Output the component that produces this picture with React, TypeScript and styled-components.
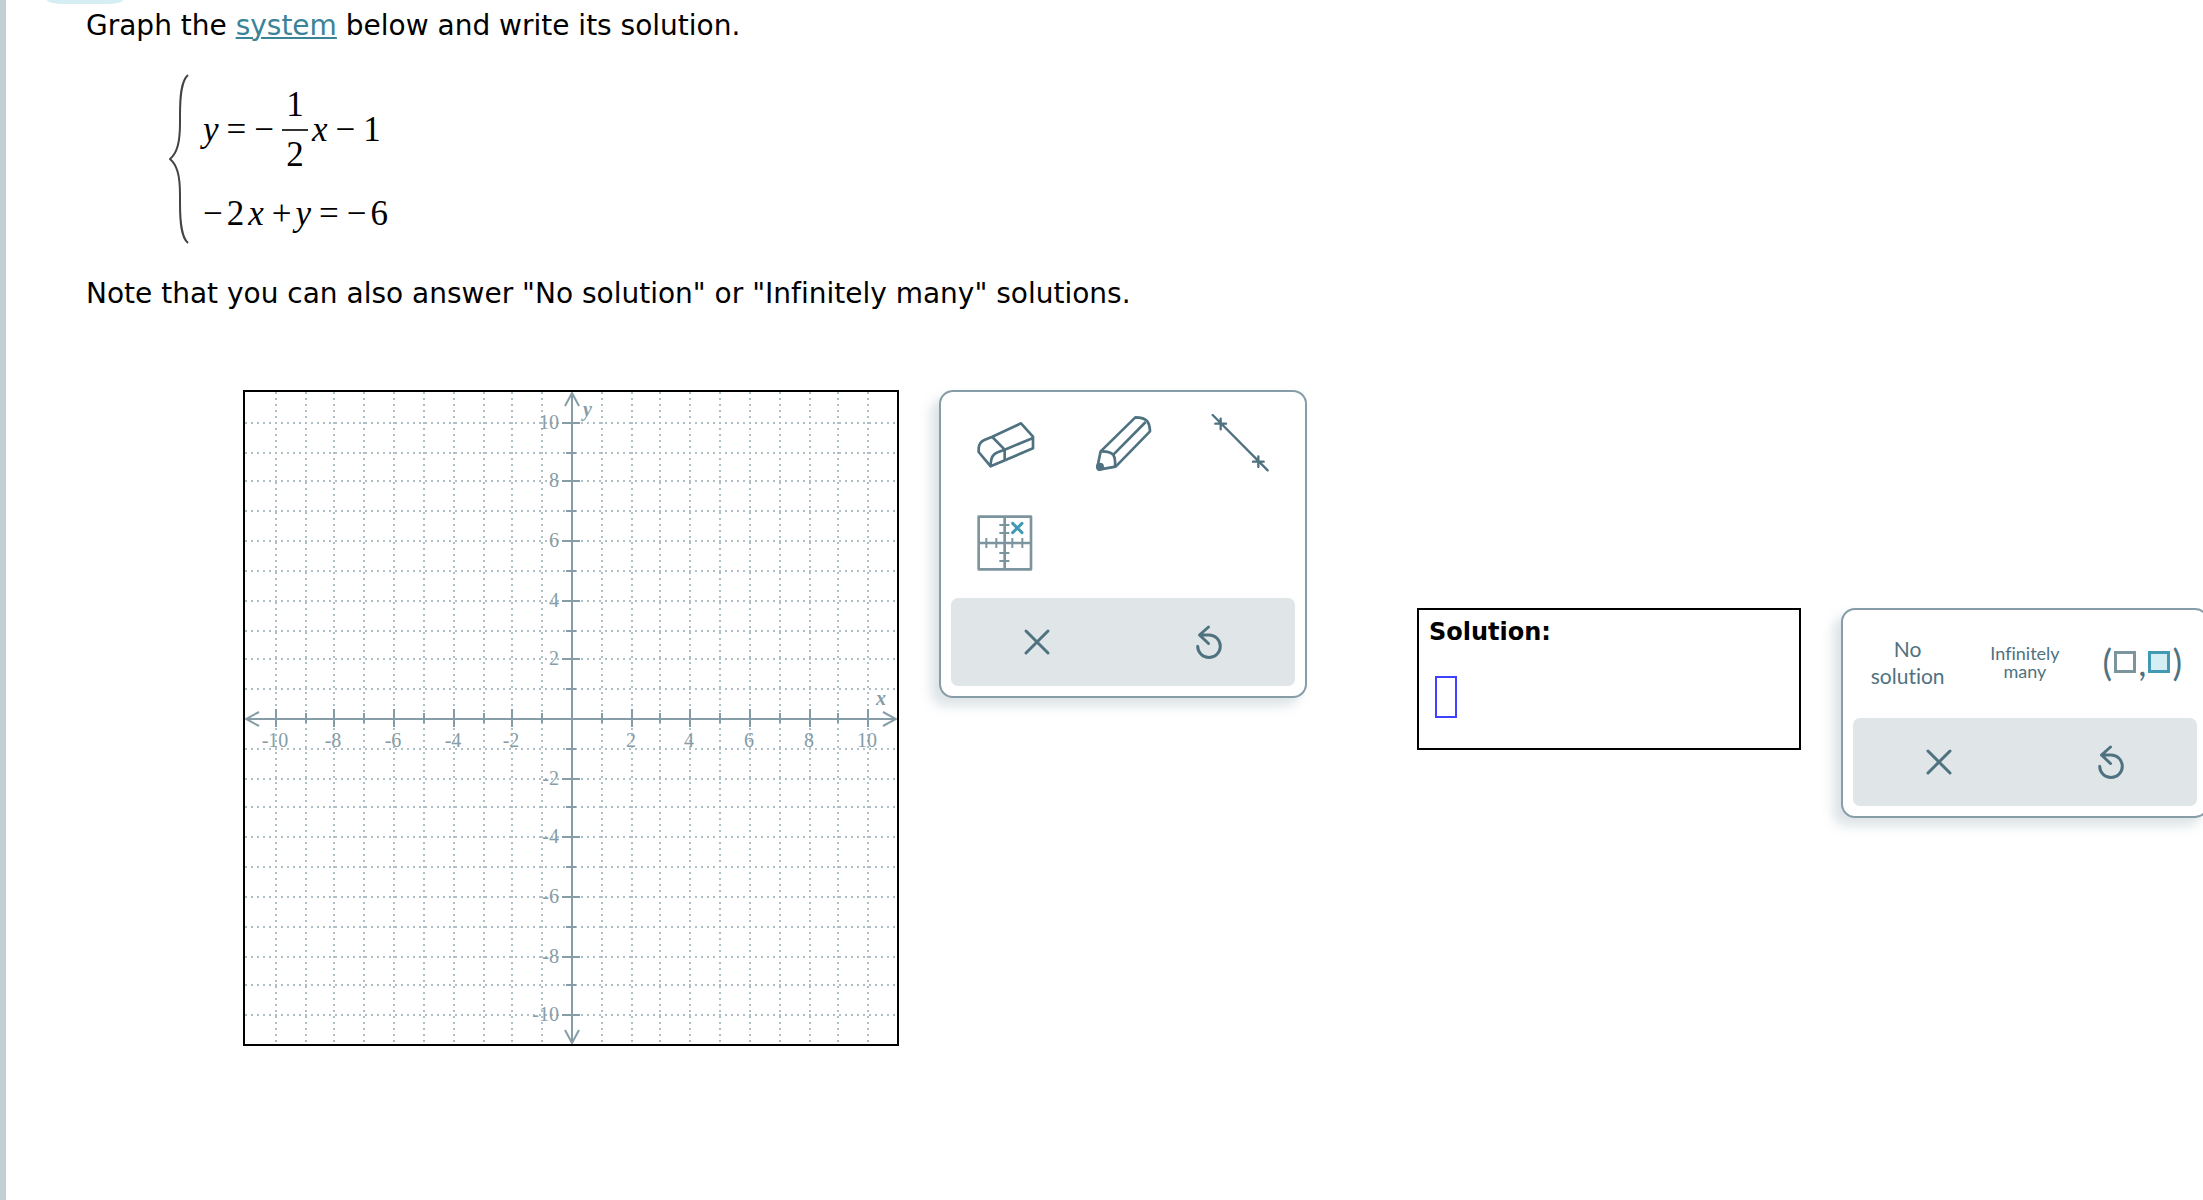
import React from "react";
import styled, { createGlobalStyle } from "styled-components";

const ink = "#4f7280";
const line = "#869da7";
const dots = "#afbfc6";
const sans = `Verdana, "DejaVu Sans", sans-serif`;
const serif = `"Liberation Serif", "Times New Roman", serif`;
const label = `Lato, "Open Sans", sans-serif`;

const GlobalStyle = createGlobalStyle`
  *, *::before, *::after { box-sizing: border-box; }
  body {
    margin: 0;
    background: #fff;
    color: #000;
    font-family: ${sans};
    font-variant-ligatures: none;
  }
  button, input { font: inherit; }
`;

const Page = styled.main`
  position: relative;
  min-height: 100vh;
  padding: 8px 0 0 80px;
  border-left: 6px solid #c4cfd4;
  overflow: hidden;
`;

const Tab = styled.div`
  position: absolute;
  top: 0;
  left: 41px;
  width: 76px;
  height: 4px;
  border-radius: 0 0 16px 16px / 0 0 4px 4px;
  background: #d4eef3;
`;

const Prompt = styled.p`
  margin: 0;
  font-size: 28px;
  line-height: 36px;
`;

const Term = styled.a`
  color: #3a8399;
  text-decoration: underline;
  text-decoration-thickness: 2px;
  text-underline-offset: 2px;
`;

const System = styled.div`
  display: flex;
  gap: 14px;
  margin: 29px 0 31px 83px;
`;

const Equations = styled.div`
  display: flex;
  flex-direction: column;
  gap: 19px;
  padding-top: 12px;
  font-family: ${serif};
  font-size: 35px;
  line-height: 40px;
`;

const Equation = styled.div`
  display: flex;
  align-items: center;
  gap: 8px;
`;

const Token = styled.span<{ $tight?: boolean; $italic?: boolean }>`
  font-style: ${(p) => (p.$italic ? "italic" : "normal")};
  margin-left: ${(p) => (p.$tight ? "-4px" : "0")};
`;

const Fraction = styled.span`
  display: flex;
  flex-direction: column;
  width: 26px;
  text-align: center;
`;

const Numerator = styled.span`
  padding-bottom: 4px;
  border-bottom: 2px solid #333;
`;

const Denominator = styled.span`
  padding-top: 4px;
`;

const Workspace = styled.div`
  display: flex;
  align-items: center;
  gap: 110px;
  margin: 78px 0 0 157px;
`;

const Group = styled.section<{ $raised?: boolean }>`
  display: flex;
  flex: none;
  align-items: flex-start;
  gap: 40px;
  padding-bottom: ${(p) => (p.$raised ? "10px" : "0")};
`;

const GraphFrame = styled.div`
  display: flex;
  border: 2px solid #000;
`;

const Panel = styled.div`
  width: 368px;
  flex: none;
  border: 2px solid ${line};
  border-radius: 14px;
  background: #fff;
  box-shadow: -8px 8px 12px rgba(79, 114, 128, 0.2);
`;

const Tools = styled.div<{ $row: number }>`
  display: grid;
  grid-template-columns: repeat(3, 1fr);
  grid-auto-rows: ${(p) => p.$row}px;
  padding: 1px 6px 5px;
`;

const ToolButton = styled.button`
  display: flex;
  align-items: center;
  justify-content: center;
  padding: 0;
  border: 0;
  background: none;
  color: ${ink};
  cursor: pointer;
`;

const Caption = styled.span<{ $compact?: boolean }>`
  font-family: ${label};
  font-size: ${(p) => (p.$compact ? 18 : 21)}px;
  line-height: ${(p) => (p.$compact ? 18 : 27)}px;
`;

const Pair = styled.span`
  display: flex;
  align-items: center;
  gap: 2px;
  font-family: ${label};
  font-size: 36px;
  line-height: 36px;
`;

const Slot = styled.span<{ $active?: boolean }>`
  width: 22px;
  height: 22px;
  border: 3px solid ${(p) => (p.$active ? "#4299b2" : "#7c949e")};
  background: ${(p) => (p.$active ? "#d4eef3" : "#fff")};
`;

const Actions = styled.div`
  display: grid;
  grid-template-columns: 1fr 1fr;
  height: 88px;
  margin: 0 10px 10px;
  border-radius: 7px;
  background: #e0e5e8;
`;

const SolutionBox = styled.div`
  display: flex;
  flex-direction: column;
  align-items: flex-start;
  gap: 28px;
  width: 384px;
  height: 142px;
  padding: 6px 10px;
  border: 2px solid #000;
`;

const SolutionLabel = styled.label`
  font-size: 24px;
  font-weight: bold;
  line-height: 32px;
`;

const SolutionInput = styled.input`
  width: 22px;
  height: 42px;
  margin-left: 6px;
  padding: 0 2px;
  border: 2px solid #4040ff;
  outline: none;
  background: #fff;
`;

const AxisText = styled.text`
  font-family: ${serif};
  font-size: 20px;
  fill: ${line};
`;

const AxisName = styled(AxisText)`
  font-style: italic;
  font-weight: bold;
`;

const GRAPH = 652;
const MID = 327;
const STOPS = [31, 61, 89, 119, 149, 179, 209, 239, 267, 297, 327, 357, 387, 415, 445, 475, 505, 535, 565, 593, 623];
const marks = STOPS.map((at, i) => ({ at, value: i - 10 })).filter((m) => m.value !== 0);

function Graph() {
  return (
    <svg width={GRAPH} height={GRAPH} viewBox={`0 0 ${GRAPH} ${GRAPH}`} role="img" aria-label="Coordinate plane">
      <g stroke={dots} strokeWidth="2" strokeDasharray="2 4" shapeRendering="crispEdges">
        {marks.map((m) => (
          <path key={m.value} d={`M${m.at} 0V${GRAPH}M0 ${m.at}H${GRAPH}`} />
        ))}
      </g>
      <g stroke={line} strokeWidth="2" shapeRendering="crispEdges">
        <path d={`M${MID} 2V650M2 ${MID}H650`} />
        {marks.map((m) => {
          const long = m.value % 2 === 0;
          const a = MID - (long ? 10 : 6);
          const b = MID + (long ? 8 : 4);
          return <path key={m.value} d={`M${m.at} ${a}V${b}M${a} ${m.at}H${b}`} />;
        })}
      </g>
      <path
        d="M320 14L327 1L334 14M320 638L327 651L334 638M14 320L1 327L14 334M638 320L651 327L638 334"
        fill="none"
        stroke={line}
        strokeWidth="2"
      />
      {marks
        .filter((m) => m.value % 2 === 0)
        .map((m) => (
          <React.Fragment key={m.value}>
            <AxisText x={m.at - 1} y={355} textAnchor="middle">{m.value}</AxisText>
            <AxisText x={314} y={m.at + 6} textAnchor="end">{-m.value}</AxisText>
          </React.Fragment>
        ))}
      <AxisName x={338} y={24}>y</AxisName>
      <AxisName x={631} y={313}>x</AxisName>
    </svg>
  );
}

function ToolIcon({ children }: { children: React.ReactNode }) {
  return (
    <svg
      width="58"
      height="58"
      viewBox="0 0 174 174"
      fill="none"
      stroke="currentColor"
      strokeWidth="8"
      strokeLinejoin="round"
      aria-hidden="true"
    >
      {children}
    </svg>
  );
}

function ClearAndUndo() {
  return (
    <Actions>
      <ToolButton type="button" aria-label="Clear">
        <svg width="28" height="28" viewBox="0 0 28 28" fill="none" stroke="currentColor" strokeWidth="3" strokeLinecap="round">
          <path d="M3 3L25 25M25 3L3 25" />
        </svg>
      </ToolButton>
      <ToolButton type="button" aria-label="Undo">
        <svg width="34" height="40" viewBox="0 0 34 40" fill="none" stroke="currentColor" strokeWidth="3" strokeLinecap="round" strokeLinejoin="round">
          <path d="M16.5 5L7.5 13L16.5 21.5M7.5 13H17a11.3 11.3 0 1 1-11.3 11.3" />
        </svg>
      </ToolButton>
    </Actions>
  );
}

export default function App() {
  return (
    <>
      <GlobalStyle />
      <Page>
        <Tab />
        <Prompt>
          Graph the <Term href="#system">system</Term> below and write its solution.
        </Prompt>

        <System>
          <svg width="20" height="172" viewBox="0 0 20 172" fill="none" stroke="#444" strokeWidth="2" aria-hidden="true">
            <path d="M19 2C12 8 11 24 11 42V50C11 70 8 80 1 86C8 92 11 102 11 122V130C11 148 12 164 19 170" />
          </svg>
          <Equations>
            <Equation>
              <Token $italic>y</Token>
              <Token>=</Token>
              <Token>−</Token>
              <Fraction>
                <Numerator>1</Numerator>
                <Denominator>2</Denominator>
              </Fraction>
              <Token $italic $tight>x</Token>
              <Token>−</Token>
              <Token>1</Token>
            </Equation>
            <Equation>
              <Token>−</Token>
              <Token $tight>2</Token>
              <Token $tight $italic>x</Token>
              <Token>+</Token>
              <Token $tight $italic>y</Token>
              <Token>=</Token>
              <Token>−</Token>
              <Token $tight>6</Token>
            </Equation>
          </Equations>
        </System>

        <Prompt>Note that you can also answer "No solution" or "Infinitely many" solutions.</Prompt>

        <Workspace>
          <Group>
            <GraphFrame>
              <Graph />
            </GraphFrame>
            <Panel>
              <Tools $row={100}>
                <ToolButton type="button" aria-label="Eraser">
                  <ToolIcon>
                    <path d="M132 28L168 68V103L41 157L5 114V103Q6 85 22 78L46 68Z" />
                    <path d="M46 69L83 107L168 72M83 107V138M41 157V150Q42 122 62 115L83 107" />
                  </ToolIcon>
                </ToolButton>
                <ToolButton type="button" aria-label="Pencil">
                  <ToolIcon>
                    <path d="M20 112L124 10Q150 10 160 22Q168 34 168 52L65 158L14 167L10 160Z" />
                    <path d="M20 112Q48 111 58 123Q65 134 63 158M58 122L155 24" />
                    <circle cx="18" cy="158" r="12" fill="currentColor" stroke="none" />
                  </ToolIcon>
                </ToolButton>
                <ToolButton type="button" aria-label="Line">
                  <ToolIcon>
                    <path strokeWidth="7" strokeLinecap="round" d="M5 3L170 169M13 29H45M29 14V46M126 143H158M142 127V159" />
                  </ToolIcon>
                </ToolButton>
                <ToolButton type="button" aria-label="Plot a point">
                  <ToolIcon>
                    <g stroke="#7c949e">
                      <path d="M5 8H162V166H5ZM83 8V166M5 87H162" />
                      <path strokeWidth="6" d="M28 72V102M58 72V102M106 72V102M136 72V102M67 33H97M67 57H97M67 117H97M67 141H97" />
                    </g>
                    <path stroke="#4299b2" strokeWidth="9" strokeLinecap="round" d="M107 28L135 56M135 28L107 56" />
                  </ToolIcon>
                </ToolButton>
              </Tools>
              <ClearAndUndo />
            </Panel>
          </Group>

          <Group $raised>
            <SolutionBox>
              <SolutionLabel htmlFor="solution">Solution:</SolutionLabel>
              <SolutionInput id="solution" type="text" />
            </SolutionBox>
            <Panel>
              <Tools $row={102}>
                <ToolButton type="button">
                  <Caption>No<br />solution</Caption>
                </ToolButton>
                <ToolButton type="button">
                  <Caption $compact>Infinitely<br />many</Caption>
                </ToolButton>
                <ToolButton type="button">
                  <Pair>
                    (<Slot />,<Slot $active />)
                  </Pair>
                </ToolButton>
              </Tools>
              <ClearAndUndo />
            </Panel>
          </Group>
        </Workspace>
      </Page>
    </>
  );
}
